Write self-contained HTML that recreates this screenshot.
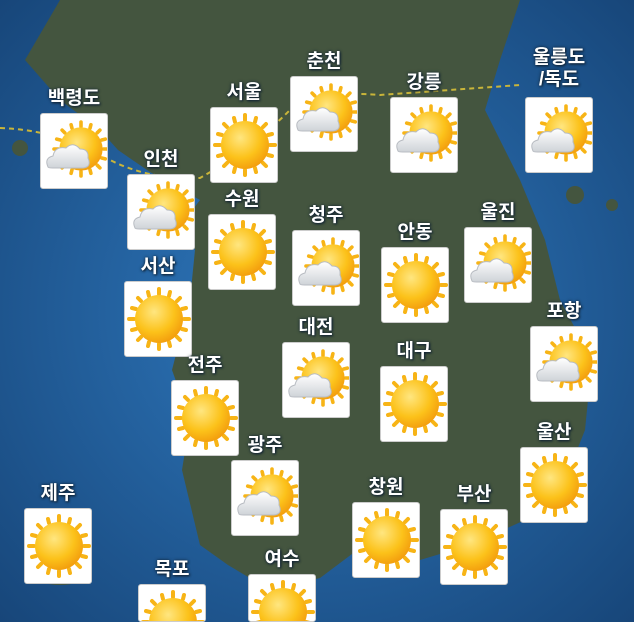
<!DOCTYPE html>
<html><head><meta charset="utf-8"><style>
html,body{margin:0;padding:0;width:634px;height:622px;overflow:hidden}
body{position:relative;background:#1a4f86;font-family:"Liberation Sans","Noto Sans CJK KR","NanumGothic",sans-serif}
#bg{position:absolute;left:0;top:0}
#m{position:absolute;left:0;top:0;width:634px;height:622px;overflow:hidden}
.c{position:absolute;width:66px;height:74px;background:#fff;border:1px solid #ccc;border-radius:3px;overflow:hidden}
.c svg{position:absolute;left:0;top:0}
.l{position:absolute;color:#fff;font-size:19px;font-weight:bold;text-align:center;width:90px;line-height:22px;text-shadow:0 0 3px #123,1px 1px 2px #123}
</style></head><body>
<svg id="bg" width="634" height="622">
<defs>
<radialGradient id="sea" cx="0.5" cy="0.5" r="0.8"><stop offset="0" stop-color="#2f7ac0"/><stop offset="1" stop-color="#143f70"/></radialGradient>
<radialGradient id="sg" cx="0.4" cy="0.35" r="0.7"><stop offset="0" stop-color="#ffe680"/><stop offset="0.6" stop-color="#fcc21a"/><stop offset="1" stop-color="#f29a0c"/></radialGradient>
<linearGradient id="cg" x1="0" y1="0" x2="0" y2="1"><stop offset="0" stop-color="#fff"/><stop offset="1" stop-color="#cfd3d8"/></linearGradient>
<g id="rays" stroke="#f7b416" stroke-width="4" stroke-linecap="round">
<line x1="0" y1="-25" x2="0" y2="-30"/><line x1="0" y1="25" x2="0" y2="30"/><line x1="-25" y1="0" x2="-30" y2="0"/><line x1="25" y1="0" x2="30" y2="0"/>
<line x1="18" y1="18" x2="21" y2="21"/><line x1="-18" y1="18" x2="-21" y2="21"/><line x1="18" y1="-18" x2="21" y2="-21"/><line x1="-18" y1="-18" x2="-21" y2="-21"/>
<line x1="10" y1="23" x2="11" y2="27"/><line x1="-10" y1="23" x2="-11" y2="27"/><line x1="10" y1="-23" x2="11" y2="-27"/><line x1="-10" y1="-23" x2="-11" y2="-27"/>
<line x1="23" y1="10" x2="27" y2="11"/><line x1="-23" y1="10" x2="-27" y2="11"/><line x1="23" y1="-10" x2="27" y2="-11"/><line x1="-23" y1="-10" x2="-27" y2="-11"/>
</g>
</defs>
<rect width="634" height="622" fill="url(#sea)"/>
<path d="M60,0 L520,0 L500,60 L485,110 L520,180 L545,240 L560,300 L592,360 L585,430 L565,480 L525,520 L470,545 L420,560 L360,548 L320,578 L270,590 L228,565 L200,545 L182,470 L190,420 L172,370 L190,300 L195,250 L185,220 L200,200 L150,172 L118,150 L100,130 L60,100 L25,60 Z" fill="#44553f"/>
<circle cx="20" cy="148" r="8" fill="#44553f"/><circle cx="575" cy="195" r="9" fill="#44553f"/><circle cx="612" cy="205" r="6" fill="#44553f"/>
<ellipse cx="60" cy="575" rx="26" ry="10" fill="#44553f"/>
<path d="M0,128 Q60,130 110,160 Q150,180 200,178 Q250,150 290,110 Q320,90 380,95 L520,85" stroke="#c9b53a" stroke-width="2" stroke-dasharray="5,4" fill="none"/>
</svg>
<div id="m"></div>
<script>
var d=[["백령도",40,113,1],["인천",127,174,1],["서울",210,107,0],["춘천",290,76,1],["강릉",390,97,1],["울릉도<br>/독도",525,97,1],["수원",208,214,0],["청주",292,230,1],["안동",381,247,0],["울진",464,227,1],["서산",124,281,0],["포항",530,326,1],["대전",282,342,1],["대구",380,366,0],["전주",171,380,0],["울산",520,447,0],["광주",231,460,1],["창원",352,502,0],["부산",440,509,0],["제주",24,508,0],["목포",138,584,0],["여수",248,574,0]];
var h='';
d.forEach(function(a){var two=a[0].indexOf('<br>')>0;var ht=Math.min(74,622-a[2]-2);
var S='<svg width="66" height="'+ht+'"><g transform="translate(34,37)"><use href="#rays"/><circle r="24" fill="url(#sg)"/></g></svg>';
var P='<svg width="66" height="'+ht+'"><g transform="translate(40,35) scale(0.9)"><use href="#rays"/><circle r="24" fill="url(#sg)"/></g><path d="M7,53 Q3,44 12,42 Q14,32 25,34 Q32,27 39,35 Q48,35 47,44 Q51,53 42,54 L12,54 Q7,54 7,53Z" fill="url(#cg)" stroke="#b8bcc2" stroke-width="1"/></svg>';
h+='<div class="l" style="left:'+(a[1]-11)+'px;top:'+(a[2]-(two?50:25))+'px">'+a[0]+'</div>';
h+='<div class="c" style="left:'+a[1]+'px;top:'+a[2]+'px;height:'+ht+'px">'+(a[3]?P:S)+'</div>';});
document.getElementById('m').innerHTML=h;
</script>
</body></html>
